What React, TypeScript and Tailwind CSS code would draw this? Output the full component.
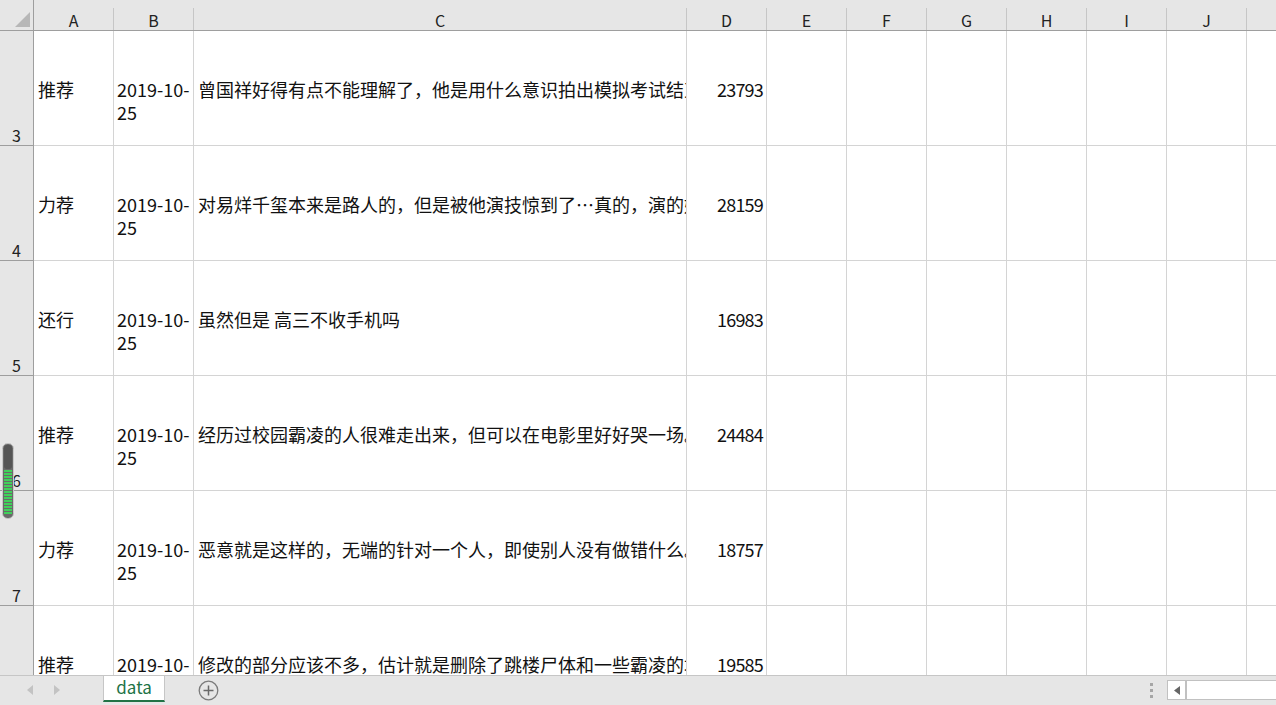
import React from 'react';

interface RowData {
  num: number;
  rating: string;
  comment: string;
  votes: string;
}

const rows: RowData[] = [
  { num: 3, rating: '推荐', comment: '曾国祥好得有点不能理解了，他是用什么意识拍出模拟考试结束那场戏的', votes: '23793' },
  { num: 4, rating: '力荐', comment: '对易烊千玺本来是路人的，但是被他演技惊到了…真的，演的好好', votes: '28159' },
  { num: 5, rating: '还行', comment: '虽然但是 高三不收手机吗', votes: '16983' },
  { num: 6, rating: '推荐', comment: '经历过校园霸凌的人很难走出来，但可以在电影里好好哭一场。', votes: '24484' },
  { num: 7, rating: '力荐', comment: '恶意就是这样的，无端的针对一个人，即使别人没有做错什么。', votes: '18757' },
  { num: 8, rating: '推荐', comment: '修改的部分应该不多，估计就是删除了跳楼尸体和一些霸凌的场景', votes: '19585' },
];

const columns = [
  { key: 'A', w: 'w-[80px]' },
  { key: 'B', w: 'w-[80px]' },
  { key: 'C', w: 'w-[493px]' },
  { key: 'D', w: 'w-[80px]' },
  { key: 'E', w: 'w-[80px]' },
  { key: 'F', w: 'w-[80px]' },
  { key: 'G', w: 'w-[80px]' },
  { key: 'H', w: 'w-[80px]' },
  { key: 'I', w: 'w-[80px]' },
  { key: 'J', w: 'w-[80px]' },
  { key: 'K', w: 'w-[80px]' },
];

const emptyCols = ['E', 'F', 'G', 'H', 'I', 'J', 'K'];

const cell = 'shrink-0 h-full border-r border-b border-[#d4d4d4] overflow-hidden';

const ZoomSlider: React.FC = () => (
  <svg
    className="absolute left-[2px] top-[443px]"
    width="12"
    height="76"
    viewBox="0 0 12 76"
  >
    <rect x="0.5" y="0.5" width="11" height="75" rx="5" fill="#6a6a6a" stroke="#c9c9c9" />
    <rect x="2" y="2" width="8" height="24" rx="3" fill="#555" />
    {Array.from({ length: 15 }).map((_, i) => (
      <rect key={i} x="2" y={27 + i * 3} width="8" height="2" fill="#3fd15a" />
    ))}
  </svg>
);

const App: React.FC = () => {
  return (
    <div
      className="flex h-[705px] w-full flex-col overflow-hidden bg-white text-[#111]"
      style={{ fontFamily: '"Noto Sans CJK SC", "Noto Sans", sans-serif' }}
    >
      {/* Grid */}
      <div className="relative flex-1 overflow-hidden">
        {/* Column headers */}
        <div className="flex h-[31px] w-max">
          <div className="flex w-[34px] shrink-0 items-end justify-end border-r border-b border-[#9e9e9e] bg-[#e6e6e6] pr-[3px] pb-[3px]">
            <svg width="15" height="15" viewBox="0 0 15 15">
              <polygon points="15,0 15,15 0,15" fill="#b7b7b7" />
            </svg>
          </div>
          {columns.map((c) => (
            <div key={c.key} className={`${c.w} shrink-0 border-b border-[#9e9e9e] bg-[#e6e6e6] pt-2`}>
              <div className="flex h-full items-end justify-center border-r border-[#c6c6c6] text-[16px] leading-[20px] text-[#222]">
                {c.key}
              </div>
            </div>
          ))}
        </div>

        {/* Rows */}
        {rows.map((r) => (
          <div key={r.num} className="flex h-[115px] w-max text-[18px] leading-[23px]">
            <div className="flex w-[34px] shrink-0 items-end justify-center border-r border-b border-[#9e9e9e] bg-[#e6e6e6] text-[16px] leading-[20px] text-[#222]">
              {r.num}
            </div>
            <div className={`${cell} w-[80px] pt-[47px] pl-[4px]`}>{r.rating}</div>
            <div className={`${cell} w-[80px] pt-[47px] pl-[3px]`}>
              <div>2019-10-</div>
              <div>25</div>
            </div>
            <div className={`${cell} w-[493px] whitespace-nowrap pt-[47px] pl-[4px]`}>{r.comment}</div>
            <div className={`${cell} w-[80px] pt-[47px] pr-[3px] text-right tracking-[-0.8px]`}>{r.votes}</div>
            {emptyCols.map((k) => (
              <div key={k} className={`${cell} w-[80px]`} />
            ))}
          </div>
        ))}

        <ZoomSlider />
      </div>

      {/* Sheet tabs bar */}
      <div className="flex h-[30px] shrink-0 items-start border-t border-[#c6c6c6] bg-[#e6e6e6]">
        <div className="flex h-[28px] w-[103px] items-center gap-[19px] pl-[27px]">
          <svg width="7" height="10" viewBox="0 0 7 10">
            <polygon points="6,0 6,10 0,5" fill="#c3c3c3" />
          </svg>
          <svg width="7" height="10" viewBox="0 0 7 10">
            <polygon points="1,0 1,10 7,5" fill="#c3c3c3" />
          </svg>
        </div>
        <div className="flex h-[26px] w-[62px] items-center justify-center border-x border-b-2 border-x-[#c6c6c6] border-b-[#217346] bg-white pb-[3px] text-[17px] leading-none text-[#217346]">
          data
        </div>
        <div className="ml-[33px] flex h-[28px] items-center">
          <svg width="21" height="21" viewBox="0 0 21 21">
            <circle cx="10.5" cy="10.5" r="9.3" fill="none" stroke="#7b7b7b" strokeWidth="1.3" />
            <path d="M10.5 5.5v10M5.5 10.5h10" stroke="#6a6a6a" strokeWidth="1.5" />
          </svg>
        </div>
        <div className="flex-1" />
        <div className="flex h-[28px] flex-col items-center justify-center gap-[3px] pr-[14px]">
          <span className="block h-[3px] w-[3px] bg-[#a6a6a6]" />
          <span className="block h-[3px] w-[3px] bg-[#a6a6a6]" />
          <span className="block h-[3px] w-[3px] bg-[#a6a6a6]" />
        </div>
        <div className="mt-[4px] flex h-[20px] w-[109px] border border-r-0 border-[#c1c1c1] bg-white">
          <div className="flex w-[19px] items-center justify-center border-r-2 border-[#c1c1c1]">
            <svg width="6" height="9" viewBox="0 0 6 9">
              <polygon points="6,0 6,9 0,4.5" fill="#666" />
            </svg>
          </div>
        </div>
      </div>
    </div>
  );
};

export default App;
